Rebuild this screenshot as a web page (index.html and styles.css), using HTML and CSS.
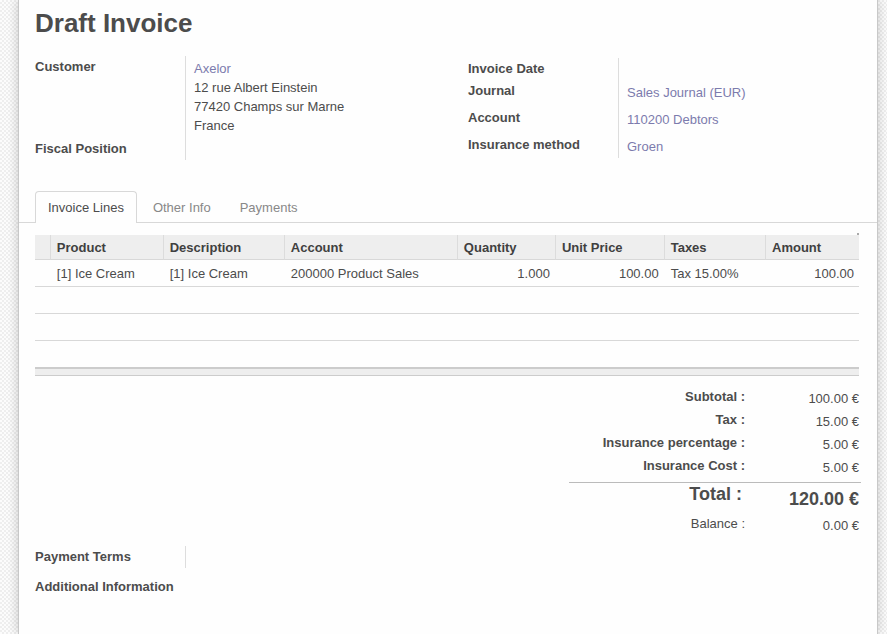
FILE: index.html
```
<!DOCTYPE html>
<html lang="en">
<head>
<meta charset="utf-8">
<title>Draft Invoice</title>
<link rel="stylesheet" href="styles.css">
</head>
<body>
<main class="sheet">
  <h1 class="title">Draft Invoice</h1>

  <div class="groups">
    <dl class="fields fields-customer">
      <dt>Customer</dt>
      <dd class="address"><a href="#">Axelor</a><br>12 rue Albert Einstein<br>77420 Champs sur Marne<br>France</dd>
      <dt>Fiscal Position</dt>
      <dd></dd>
    </dl>
    <dl class="fields fields-invoice">
      <dt>Invoice Date</dt>
      <dd></dd>
      <dt>Journal</dt>
      <dd><a href="#">Sales Journal (EUR)</a></dd>
      <dt>Account</dt>
      <dd><a href="#">110200 Debtors</a></dd>
      <dt>Insurance method</dt>
      <dd><a href="#">Groen</a></dd>
    </dl>
  </div>

  <div class="tabs" role="tablist">
    <button class="tab tab-active" type="button" role="tab" aria-selected="true">Invoice Lines</button>
    <button class="tab" type="button" role="tab" aria-selected="false">Other Info</button>
    <button class="tab" type="button" role="tab" aria-selected="false">Payments</button>
  </div>

  <section class="panel">
    <table class="lines">
      <colgroup>
        <col class="col-handle"><col class="col-product"><col class="col-description"><col class="col-account">
        <col class="col-quantity"><col class="col-price"><col class="col-taxes"><col class="col-amount">
      </colgroup>
      <thead>
        <tr><th></th><th>Product</th><th>Description</th><th>Account</th><th>Quantity</th><th>Unit Price</th><th>Taxes</th><th>Amount</th></tr>
      </thead>
      <tbody>
        <tr><td></td><td>[1] Ice Cream</td><td>[1] Ice Cream</td><td>200000 Product Sales</td><td class="number">1.000</td><td class="number">100.00</td><td>Tax 15.00%</td><td class="number">100.00</td></tr>
        <tr><td colspan="8"></td></tr>
        <tr><td colspan="8"></td></tr>
        <tr><td colspan="8"></td></tr>
      </tbody>
      <tfoot>
        <tr><td colspan="8"></td></tr>
      </tfoot>
    </table>

    <dl class="totals">
      <div class="sum"><dt>Subtotal :</dt><dd>100.00 €</dd></div>
      <div class="sum"><dt>Tax :</dt><dd>15.00 €</dd></div>
      <div class="sum"><dt>Insurance percentage :</dt><dd>5.00 €</dd></div>
      <div class="sum"><dt>Insurance Cost :</dt><dd>5.00 €</dd></div>
      <div class="sum sum-total"><dt>Total :</dt><dd>120.00 €</dd></div>
      <div class="sum sum-balance"><dt>Balance :</dt><dd>0.00 €</dd></div>
    </dl>

    <dl class="fields fields-terms">
      <dt>Payment Terms</dt>
      <dd></dd>
    </dl>
    <h2 class="notes">Additional Information</h2>
  </section>
</main>
</body>
</html>
```
FILE: styles.css
```
* {
  box-sizing: border-box;
}

body {
  margin: 0;
  padding: 0 9px 0 18px;
  min-height: 100vh;
  display: flex;
  overflow-x: hidden;
  background: repeating-conic-gradient(#eee 0 25%, #fcfcfc 0 50%) 0 0 / 4px 4px;
  color: #4c4c4c;
  font: 13px/22px "Liberation Sans", Arial, sans-serif;
}

.sheet {
  flex: 1;
  padding: 7px 18px 0 16px;
  border: solid #c8c8c8;
  border-width: 0 1px;
  background: #fefefe;
  box-shadow: 0 0 10px rgba(0, 0, 0, 0.2);
}

a {
  color: #7c7bad;
  text-decoration: none;
}

dl,
dd {
  margin: 0;
}

dt {
  font-weight: bold;
}

.title {
  margin: 0 0 17px;
  font-size: 26px;
  line-height: 32px;
}

.groups {
  display: grid;
  grid-template-columns: 1fr 1fr;
  gap: 42px;
  align-items: start;
}

.fields {
  display: grid;
  grid-template-columns: 150px 1fr;
}

.fields dd {
  padding-left: 8px;
  border-left: 1px solid #ddd;
}

.fields-customer {
  grid-template-rows: 82px 22px;
}

.fields .address {
  padding-top: 3px;
  line-height: 19px;
}

.fields-invoice {
  margin-top: 2px;
  grid-template-rows: 22px 27px 27px 24px;
}

.fields-invoice dd {
  line-height: 26px;
}

.tabs {
  display: flex;
  gap: 3px;
  margin: 31px -18px 0 -16px;
  padding-left: 16px;
  border-bottom: 1px solid #d8d8d8;
}

.tab {
  height: 32px;
  margin-bottom: -1px;
  padding: 0 12px;
  border: 1px solid transparent;
  border-bottom: 0;
  border-radius: 4px 4px 0 0;
  background: none;
  color: #888;
  font: inherit;
}

.tab-active {
  border-color: #d8d8d8;
  background: #fefefe;
  color: #4c4c4c;
}

.panel {
  padding-top: 12px;
}

.lines {
  position: relative;
  width: 100%;
  table-layout: fixed;
  border-collapse: separate;
  border-spacing: 0;
}

/* Resize handle tip above the last column */
.lines::after {
  content: "";
  position: absolute;
  top: -2px;
  right: 0;
  width: 2px;
  height: 2px;
  background: #aaa;
}

.col-handle { width: 1.8%; }
.col-product { width: 13.7%; }
.col-description { width: 14.7%; }
.col-account { width: 21%; }
.col-quantity { width: 11.9%; }
.col-price { width: 13.2%; }
.col-taxes { width: 12.3%; }
.col-amount { width: 11.4%; }

.lines th,
.lines td {
  padding: 2px 5px 0 7px;
  border-bottom: 1px solid #d8d8d8;
  text-align: left;
}

.lines th {
  height: 25px;
  background: #eee;
  color: #404040;
}

.lines th + th {
  padding-left: 6px;
  border-left: 1px solid #dcdcdc;
}

.lines td {
  height: 27px;
}

.lines .number {
  text-align: right;
}

.lines tbody tr:last-child td {
  height: 26px;
  border-bottom: 0;
}

.lines tfoot td {
  height: 9px;
  border-top: 2px solid #ccc;
  border-bottom-color: #ccc;
  background: #eee;
}

.totals {
  width: 292px;
  margin: 9px -2px 0 auto;
}

.sum {
  display: grid;
  grid-template-columns: 1fr 114px;
  padding-right: 2px;
  line-height: 23px;
  text-align: right;
}

.sum dd {
  padding-top: 2px;
  margin-bottom: -2px;
}

.sum-total {
  margin-top: 5px;
  border-top: 1px solid #bbb;
  font-size: 18px;
  font-weight: bold;
}

.sum-total dt {
  padding-right: 3px;
}

.sum-total dd {
  padding-top: 5px;
}

.sum-balance {
  margin-top: 3px;
}

.sum-balance dt {
  font-weight: normal;
}

.fields-terms {
  margin-top: 11px;
  grid-template-rows: 22px;
}

.notes {
  margin: 8px 0 0;
  font-size: 13px;
}
```
